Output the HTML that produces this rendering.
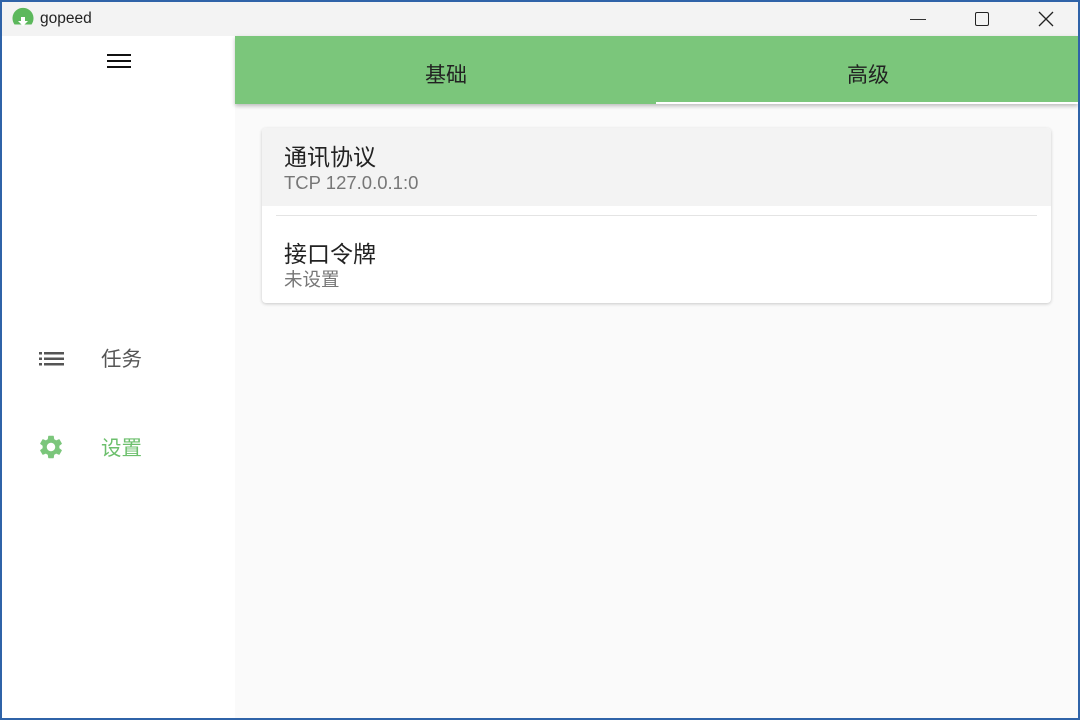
<!DOCTYPE html>
<html><head><meta charset="utf-8"><style>
*{margin:0;padding:0;box-sizing:border-box}
html,body{width:1080px;height:720px;overflow:hidden;background:#2f63a8;font-family:"Liberation Sans","Noto Sans CJK SC",sans-serif}
.win{position:absolute;left:2px;top:2px;width:1076px;height:716px;background:#fafafa;overflow:hidden}
.title{position:absolute;left:0;top:0;width:100%;height:34px;background:#f3f3f3}
.title .name{position:absolute;left:38px;top:8px;font-size:15.5px;color:#222}
.side{position:absolute;left:0;top:34px;width:233px;height:682px;background:#fff}
.main{position:absolute;left:233px;top:34px;right:0;bottom:0;background:#fafafa}
.tabs{position:absolute;left:0;top:0;right:0;height:68px;background:#7bc67b;box-shadow:0 2px 4px rgba(0,0,0,.25)}
.tab{position:absolute;top:27px;font-size:21px;color:#222;line-height:26px}
.ind{position:absolute;left:421px;right:0;top:66px;height:2px;background:#fff}
.card{position:absolute;left:27px;top:92px;width:789px;height:175px;background:#fff;border-radius:4px;box-shadow:0 1px 3px rgba(0,0,0,.2);overflow:hidden}
.row1{height:78px;background:#f3f3f3;padding:15px 22px 0}
.t{font-size:23px;color:#222;line-height:28px}
.s{font-size:18.5px;color:#777;line-height:24px}
.div{margin:9px 14px 0;height:1px;background:#e4e4e4}
.row2{padding:24px 22px 0}
.nav{position:absolute;font-size:20.5px;line-height:26px}
</style></head><body>
<div class="win">
 <div class="title">
  <svg style="position:absolute;left:9px;top:5px" width="24" height="22" viewBox="0 0 24 22"><path d="M3.5 17.5 A10.5 10.5 0 1 1 20.5 17.5 Z" fill="#5cb85c"/><path d="M10 10h4v4h3l-5 5-5-5h3z" fill="#fff"/></svg>
  <div class="name">gopeed</div>
  <div style="position:absolute;left:908px;top:17px;width:16px;height:1px;background:#333"></div>
  <div style="position:absolute;left:973px;top:10px;width:14px;height:14px;border:1.5px solid #222;border-radius:2px"></div>
  <svg style="position:absolute;left:1036px;top:9px" width="16" height="16" viewBox="0 0 16 16"><path d="M1 1L15 15M15 1L1 15" stroke="#222" stroke-width="1.3"/></svg>
 </div>
 <div class="side">
  <svg style="position:absolute;left:104px;top:16px" width="26" height="18" viewBox="0 0 26 18"><path d="M1 3h24M1 9h24M1 15h24" stroke="#111" stroke-width="2"/></svg>
  <svg style="position:absolute;left:36px;top:313px" width="28" height="20" viewBox="0 0 28 20"><g fill="#555"><rect x="1" y="3" width="3" height="2.5"/><rect x="1" y="8.5" width="3" height="2.5"/><rect x="1" y="14" width="3" height="2.5"/><rect x="6" y="3" width="20" height="2.5"/><rect x="6" y="8.5" width="20" height="2.5"/><rect x="6" y="14" width="20" height="2.5"/></g></svg>
  <div class="nav" style="left:99px;top:311px;color:#555">任务</div>
  <svg style="position:absolute;left:35px;top:397px" width="28" height="28" viewBox="0 0 24 24"><path fill="#7bc67b" d="M19.14 12.94c.04-.3.06-.61.06-.94 0-.32-.02-.64-.07-.94l2.030-1.58a.49.49 0 0 0 .12-.61l-1.92-3.32a.488.488 0 0 0-.59-.22l-2.39.96c-.5-.38-1.030-.7-1.62-.94l-.36-2.54a.484.484 0 0 0-.48-.41h-3.840c-.24 0-.43.17-.47.41l-.36 2.54c-.59.24-1.13.57-1.62.94l-2.39-.96c-.22-.08-.47 0-.59.22L2.74 8.87c-.12.21-.08.47.12.61l2.03 1.58c-.05.3-.09.63-.09.94s.02.64.07.94l-2.03 1.58a.49.49 0 0 0-.12.61l1.92 3.32c.12.22.37.29.59.22l2.39-.96c.5.38 1.03.7 1.62.94l.36 2.54c.05.24.24.41.48.41h3.84c.24 0 .44-.17.47-.41l.36-2.54c.59-.24 1.13-.56 1.62-.94l2.39.96c.22.08.47 0 .59-.22l1.92-3.32c.12-.22.07-.47-.12-.61l-2.01-1.58zM12 15.6c-1.98 0-3.6-1.62-3.6-3.6s1.62-3.6 3.6-3.6 3.6 1.62 3.6 3.6-1.62 3.6-3.6 3.6z"/></svg>
  <div class="nav" style="left:99px;top:400px;color:#6cbf6c">设置</div>
 </div>
 <div class="main">
  <div class="tabs">
   <div class="tab" style="left:190px">基础</div>
   <div class="tab" style="left:612px">高级</div>
   <div class="ind"></div>
  </div>
  <div class="card">
   <div class="row1"><div class="t">通讯协议</div><div class="s">TCP 127.0.0.1:0</div></div>
   <div class="div"></div>
   <div class="row2"><div class="t">接口令牌</div><div class="s">未设置</div></div>
  </div>
 </div>
</div>
</body></html>
